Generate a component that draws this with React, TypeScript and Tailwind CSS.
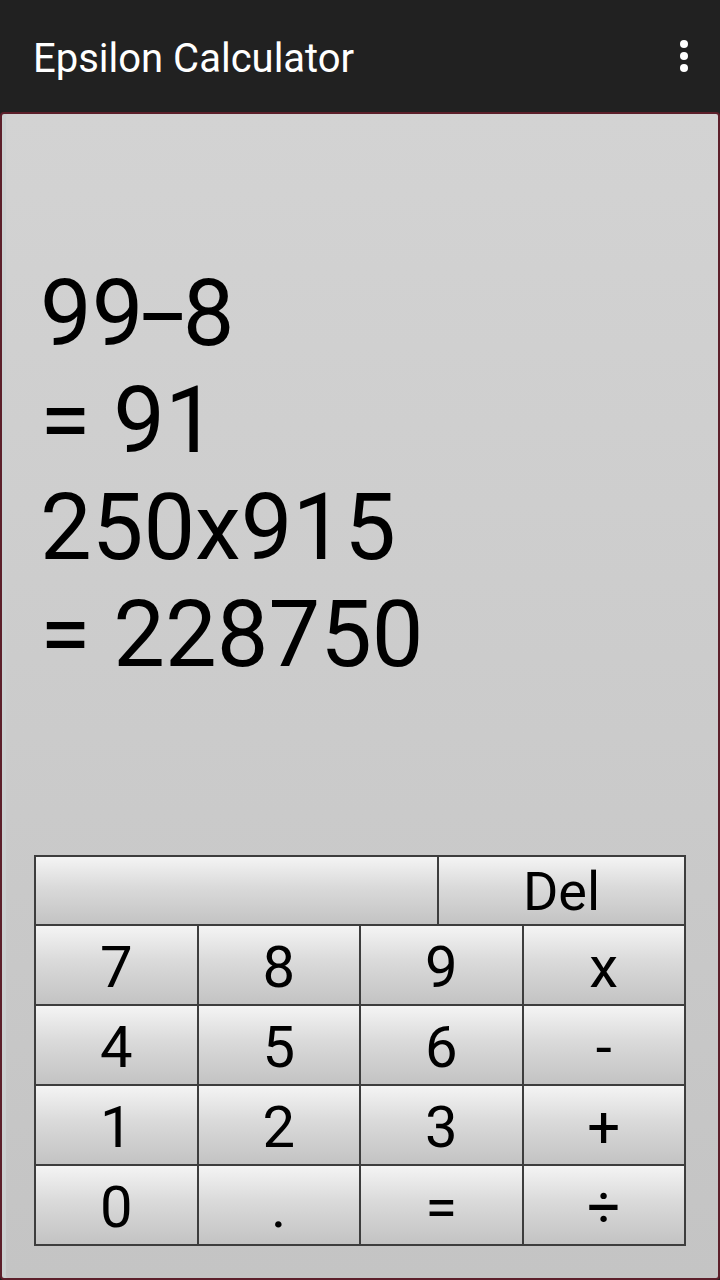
import React from "react";

const rows: string[][] = [
  ["7", "8", "9", "x"],
  ["4", "5", "6", "-"],
  ["1", "2", "3", "+"],
  ["0", ".", "=", "÷"],
];

const roboto = { fontFamily: 'Roboto, "Noto Sans", sans-serif' };

function Key({ label, className = "" }: { label: string; className?: string }) {
  return (
    <div
      className={`flex items-center justify-center bg-[linear-gradient(to_bottom,#f4f4f4,#dadada_45%,#c3c3c3)] leading-none text-black ${className}`}
      style={roboto}
    >
      {label}
    </div>
  );
}

// wide dash used in the expression lines
function Dash() {
  return (
    <span className="inline-block px-[7px]">
      <span className="inline-block scale-x-[1.75]">-</span>
    </span>
  );
}

export default function App() {
  return (
    <div className="flex h-[1280px] w-[720px] flex-col bg-[#212121]">
      {/* action bar */}
      <div className="flex h-[112px] shrink-0 items-center justify-between pl-[33px] pr-[32px]">
        <span className="mt-[6px] text-[40px] leading-none text-white" style={roboto}>
          Epsilon Calculator
        </span>
        <div className="flex flex-col items-center gap-[4px]">
          <span className="h-[8px] w-[8px] rounded-full bg-white" />
          <span className="h-[8px] w-[8px] rounded-full bg-white" />
          <span className="h-[8px] w-[8px] rounded-full bg-white" />
        </div>
      </div>

      {/* calculator panel */}
      <div className="flex flex-1 flex-col rounded-[4px] border-2 border-[#5c1f2a] bg-[linear-gradient(to_bottom,#d3d3d3,#c4c4c4)] shadow-[inset_4px_0_0_#cbd0d0]">
        <div className="pl-[38px] pt-[146px] text-[92px] leading-[107px] text-black" style={roboto}>
          <div>
            99
            <Dash />8
          </div>
          <div>= 91</div>
          <div>250x915</div>
          <div>= 228750</div>
        </div>

        <div className="flex-1" />

        {/* keypad */}
        <div className="mx-[32px] mb-[32px] flex flex-col gap-[2px] bg-[#3d3d3d] p-[2px]">
          <div className="flex h-[67px] gap-[2px]">
            <Key label="" className="w-[401px]" />
            <Key label="Del" className="flex-1 pt-[2px] text-[54px]" />
          </div>
          {rows.map((row, i) => (
            <div key={i} className="grid h-[78px] grid-cols-4 gap-[2px]">
              {row.map((k) => (
                <Key key={k} label={k} className="pt-[4px] text-[58px]" />
              ))}
            </div>
          ))}
        </div>
      </div>
    </div>
  );
}
